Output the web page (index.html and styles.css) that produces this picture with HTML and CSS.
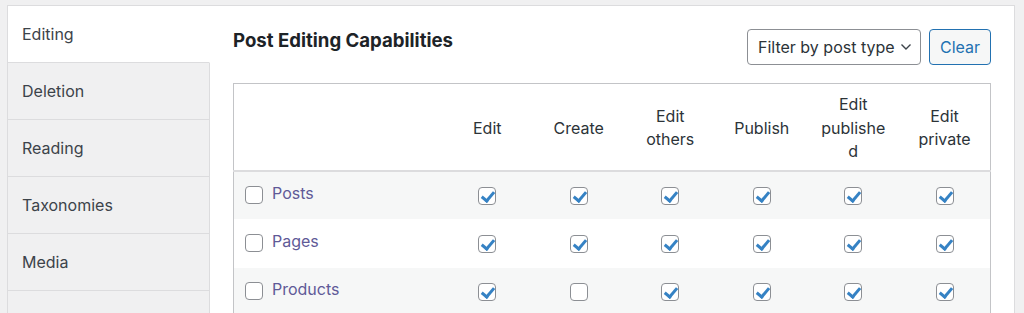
FILE: index.html
```html
<!DOCTYPE html>
<html lang="en">

<head>
  <meta charset="UTF-8" />
  <meta name="viewport" content="width=device-width, initial-scale=1.0" />
  <title>Post Editing Capabilities</title>
  <link rel="stylesheet" href="styles.css">
</head>

<body>
  <div class="panel">
    <!-- Tabs -->
    <ul class="tabs">
      <li class="tab active">Editing</li>
      <li class="tab">Deletion</li>
      <li class="tab">Reading</li>
      <li class="tab">Taxonomies</li>
      <li class="tab">Media</li>
      <li class="tab"></li>
    </ul>

    <!-- Content -->
    <div class="content">
      <div class="content-head">
        <h2>Post Editing Capabilities</h2>
        <div class="filters">
          <div class="select">
            Filter by post type
            <svg width="12" height="8" viewBox="0 0 12 8"><path d="M1.5 1.5 6 6l4.5-4.5" fill="none" stroke="#3c434a" stroke-width="1.4" /></svg>
          </div>
          <button class="clear">Clear</button>
        </div>
      </div>

      <table class="caps">
        <colgroup>
          <col class="col-type">
          <col><col><col><col><col><col>
        </colgroup>
        <thead>
          <tr>
            <th></th>
            <th>Edit</th>
            <th>Create</th>
            <th>Edit others</th>
            <th>Publish</th>
            <th>Edit published</th>
            <th>Edit private</th>
          </tr>
        </thead>
        <tbody>
          <tr>
            <td class="type"><input type="checkbox"><a href="#">Posts</a></td>
            <td><input type="checkbox" checked></td>
            <td><input type="checkbox" checked></td>
            <td><input type="checkbox" checked></td>
            <td><input type="checkbox" checked></td>
            <td><input type="checkbox" checked></td>
            <td><input type="checkbox" checked></td>
          </tr>
          <tr>
            <td class="type"><input type="checkbox"><a href="#">Pages</a></td>
            <td><input type="checkbox" checked></td>
            <td><input type="checkbox" checked></td>
            <td><input type="checkbox" checked></td>
            <td><input type="checkbox" checked></td>
            <td><input type="checkbox" checked></td>
            <td><input type="checkbox" checked></td>
          </tr>
          <tr>
            <td class="type"><input type="checkbox"><a href="#">Products</a></td>
            <td><input type="checkbox" checked></td>
            <td><input type="checkbox"></td>
            <td><input type="checkbox" checked></td>
            <td><input type="checkbox" checked></td>
            <td><input type="checkbox" checked></td>
            <td><input type="checkbox" checked></td>
          </tr>
        </tbody>
      </table>
    </div>
  </div>
</body>

</html>
```

FILE: styles.css
```css
* {
  margin: 0;
  padding: 0;
  box-sizing: border-box;
}

html {
  overflow: hidden;
}

body {
  background-color: #f0f0f1;
  font-family: "Inter", "Liberation Sans", sans-serif;
  font-size: 16px;
  color: #3c434a;
  padding: 5px 9px 0 7px;
  height: 313px;
  overflow: hidden;
}

.panel {
  display: flex;
  background-color: #fff;
  border: 1px solid #dcdcde;
  border-bottom: none;
  height: 100%;
  overflow: hidden;
}

/* Tabs */
.tabs {
  list-style: none;
  width: 202px;
  flex-shrink: 0;
  display: flex;
  flex-direction: column;
}

.tab {
  height: 57px;
  flex-shrink: 0;
  display: flex;
  align-items: center;
  padding-left: 14px;
  background-color: #f0f0f1;
  border-right: 1px solid #dcdcde;
  border-bottom: 1px solid #dcdcde;
  font-size: 16px;
  color: #3c434a;
}

.tab.active {
  background-color: #fff;
  border-right-color: transparent;
}

/* Content */
.content {
  flex: 1;
  padding: 23px 23px 0 23px;
}

.content-head {
  display: flex;
  justify-content: space-between;
  align-items: flex-start;
  margin-bottom: 18px;
}

.content-head h2 {
  font-size: 18.6px;
  font-weight: 700;
  color: #1d2327;
}

.filters {
  display: flex;
  gap: 8px;
}

.select {
  height: 36px;
  width: 174px;
  display: flex;
  align-items: center;
  justify-content: space-between;
  padding: 0 8px 0 10px;
  border: 1px solid #8c8f94;
  border-radius: 4px;
  font-size: 16px;
  color: #2c3338;
}

.clear {
  height: 36px;
  width: 62px;
  border: 1px solid #2271b1;
  border-radius: 4px;
  background-color: #f6f7f7;
  color: #2271b1;
  font-family: inherit;
  font-size: 16px;
}

/* Table */
.caps {
  width: 100%;
  border-collapse: collapse;
  table-layout: fixed;
  border: 1px solid #c3c4c7;
}

.caps .col-type {
  width: 208px;
}

.caps th {
  height: 87px;
  padding: 3px 12px 0;
  font-weight: 400;
  font-size: 16px;
  line-height: 23.5px;
  color: #2c3338;
  text-align: center;
  overflow-wrap: anywhere;
  border-bottom: 2px solid #dcdcde;
}

.caps td {
  height: 48.5px;
  text-align: center;
  vertical-align: middle;
}

.caps tbody tr:nth-child(odd) {
  background-color: #f6f7f7;
}

.caps td.type {
  text-align: left;
  padding-left: 11px;
}

.caps td.type a {
  color: #5f5a97;
  text-decoration: none;
  margin-left: 9px;
  vertical-align: middle;
  position: relative;
  top: -3px;
}

input[type="checkbox"] {
  appearance: none;
  width: 18px;
  height: 18px;
  border: 1px solid #8c8f94;
  border-radius: 4px;
  background-color: #fff;
  vertical-align: middle;
  position: relative;
  top: -1px;
}

input[type="checkbox"]:checked::before {
  content: "";
  position: absolute;
  left: 5px;
  top: 1px;
  width: 5px;
  height: 10px;
  border-right: 3px solid #3582c4;
  border-bottom: 3px solid #3582c4;
  transform: rotate(40deg);
}
```
